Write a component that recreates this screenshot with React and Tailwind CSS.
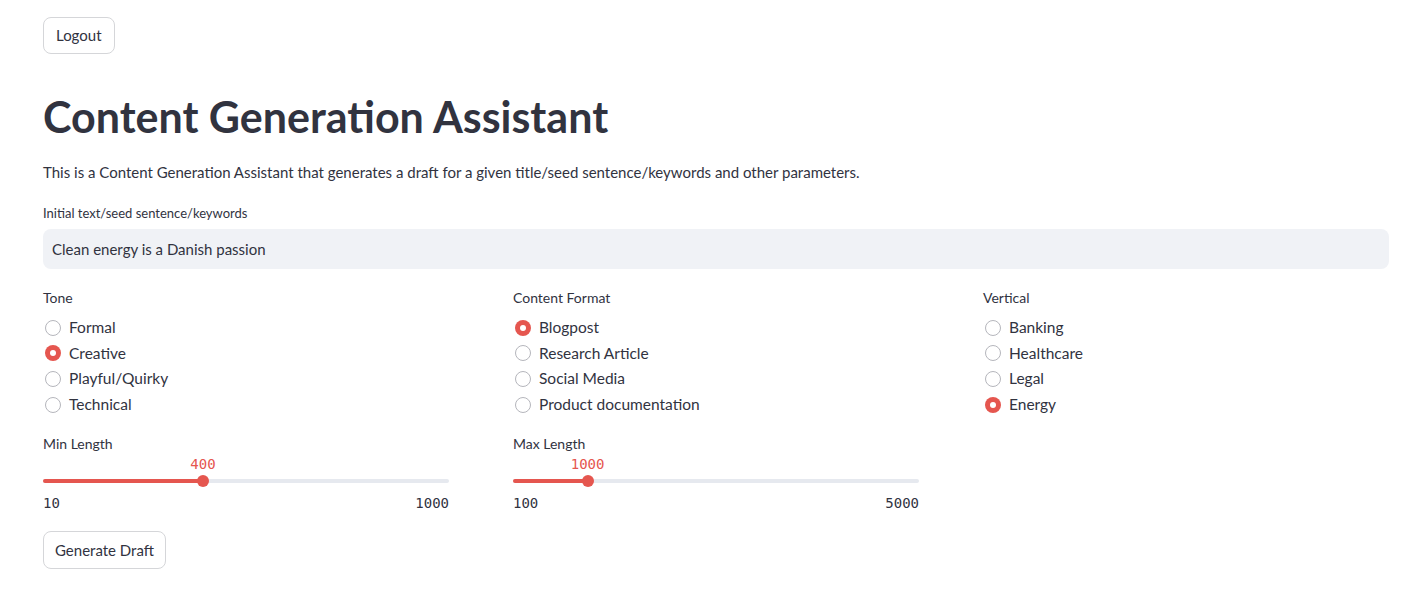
import { useState } from "react";

const font = { fontFamily: '"Source Sans Pro", Lato, "Noto Sans", sans-serif' };
const mono = { fontFamily: '"DejaVu Sans Mono", monospace' };

function Radio({ label, options, value, onChange }) {
  return (
    <div>
      <div className="text-[14px] leading-[20px] text-[#31333f] mb-[7px]">{label}</div>
      <div className="flex flex-col">
        {options.map((o) => (
          <label key={o} className="flex items-center h-[25.6px] cursor-pointer" onClick={() => onChange(o)}>
            {value === o ? (
              <span className="w-[16px] h-[16px] rounded-full bg-[#e5564f] flex items-center justify-center ml-[2px]">
                <span className="w-[6px] h-[6px] rounded-full bg-white" />
              </span>
            ) : (
              <span className="w-[16px] h-[16px] rounded-full border border-[#b5b6bc] bg-white ml-[2px]" />
            )}
            <span className="ml-[8px] text-[15.5px] text-[#31333f]">{o}</span>
          </label>
        ))}
      </div>
    </div>
  );
}

function Slider({ label, min, max, value }) {
  const pct = ((value - min) / (max - min)) * 100;
  return (
    <div className="w-[406px]">
      <div className="text-[14px] leading-[20px] text-[#31333f]">{label}</div>
      <div className="relative h-[39px]">
        <div className="absolute top-[25px] left-0 right-0 h-[4px] rounded bg-[#e6e9ef]" />
        <div className="absolute top-[25px] left-0 h-[4px] rounded bg-[#e5564f]" style={{ width: pct + "%" }} />
        <div
          className="absolute top-[21px] w-[12px] h-[12px] rounded-full bg-[#e5564f] -ml-[6px]"
          style={{ left: pct + "%" }}
        />
        <div
          className="absolute top-0 text-[14px] leading-[20px] text-[#e5564f] -translate-x-1/2"
          style={{ left: pct + "%", ...mono }}
        >
          {value}
        </div>
      </div>
      <div className="flex justify-between text-[14px] leading-[20px] text-[#31333f]" style={mono}>
        <span>{min}</span>
        <span>{max}</span>
      </div>
    </div>
  );
}

export default function App() {
  const [tone, setTone] = useState("Creative");
  const [format, setFormat] = useState("Blogpost");
  const [vertical, setVertical] = useState("Energy");

  return (
    <div className="min-h-[592px] bg-white px-[43px] pt-[17px] text-[#31333f]" style={font}>
      <button className="h-[37px] px-[12px] pb-[1px] rounded-[8px] border border-[#d5d6d9] bg-white text-[15px]">Logout</button>

      <h1 className="mt-[37px] text-[43px] font-bold leading-[52px] text-[#31333f]">
        Content Generation Assistant
      </h1>
      <p className="mt-[17px] text-[15px] leading-[24px]">
        This is a Content Generation Assistant that generates a draft for a given title/seed sentence/keywords and other parameters.
      </p>

      <div className="mt-[19px] text-[13px] leading-[20px]">Initial text/seed sentence/keywords</div>
      <div className="mt-[6px] h-[40px] w-[1346px] rounded-[8px] bg-[#f0f2f6] flex items-center px-[9px] text-[15px]">
        Clean energy is a Danish passion
      </div>

      <div className="mt-[19px] grid grid-cols-[438px_438px_438px] gap-x-[32px]">
        <Radio label="Tone" options={["Formal", "Creative", "Playful/Quirky", "Technical"]} value={tone} onChange={setTone} />
        <Radio
          label="Content Format"
          options={["Blogpost", "Research Article", "Social Media", "Product documentation"]}
          value={format}
          onChange={setFormat}
        />
        <Radio label="Vertical" options={["Banking", "Healthcare", "Legal", "Energy"]} value={vertical} onChange={setVertical} />
      </div>

      <div className="mt-[17px] grid grid-cols-[438px_438px_438px] gap-x-[32px]">
        <Slider label="Min Length" min={10} max={1000} value={400} />
        <Slider label="Max Length" min={100} max={5000} value={1000} />
      </div>

      <button className="mt-[18px] h-[38px] px-[11px] rounded-[8px] border border-[#d5d6d9] bg-white text-[15px]">
        Generate Draft
      </button>
    </div>
  );
}
